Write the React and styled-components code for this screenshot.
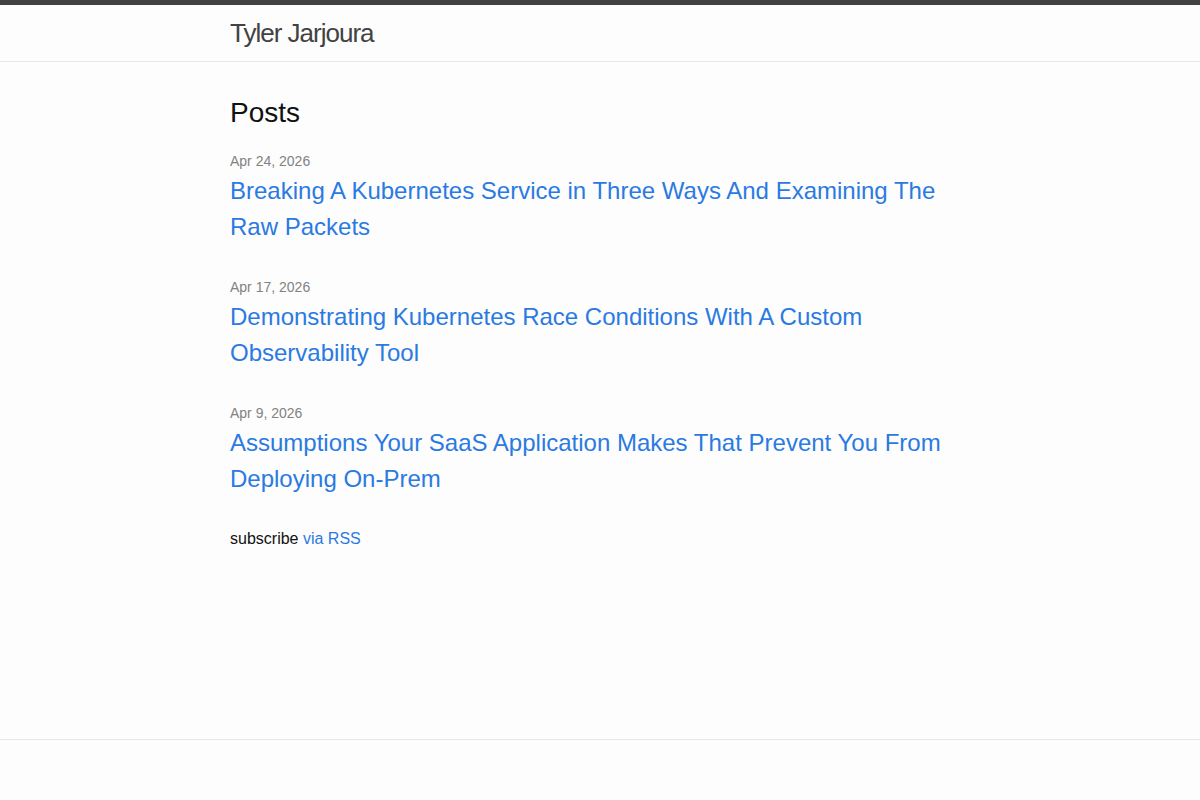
import React from "react";
import styled, { createGlobalStyle } from "styled-components";

const GlobalStyle = createGlobalStyle`
  * { box-sizing: border-box; }
  html, body { margin: 0; padding: 0; }
  body {
    font: 400 16px/1.5 "Liberation Sans", Helvetica, Arial, sans-serif;
    color: #111111;
    background-color: #fdfdfd;
    -webkit-font-smoothing: antialiased;
  }
`;

const Page = styled.div`
  display: flex;
  flex-direction: column;
  min-height: 100vh;
`;

const Wrapper = styled.div`
  max-width: 740px;
  margin: 0 auto;
  padding: 0 30px;
  box-sizing: content-box;
`;

const Header = styled.header`
  border-top: 5px solid #424242;
  border-bottom: 1px solid #e8e8e8;
  min-height: 56px;
`;

const SiteTitle = styled.a`
  display: inline-block;
  font-size: 26px;
  font-weight: 300;
  line-height: 56px;
  letter-spacing: -1px;
  color: #424242;
  text-decoration: none;
`;

const Main = styled.main`
  flex: 1;
  padding: 30px 0;
`;

const ListHeading = styled.h2`
  font-size: 28px;
  font-weight: 400;
  line-height: 1.5;
  margin: 0 0 15px;
`;

const PostList = styled.ul`
  list-style: none;
  margin: 0 0 15px;
  padding: 0;
`;

const PostItem = styled.li`
  margin-bottom: 30px;
`;

const PostMeta = styled.span`
  font-size: 14px;
  color: #828282;
`;

const PostTitle = styled.h3`
  margin: 0 0 15px;
  font-weight: 400;
  font-size: 24px;
  line-height: 1.5;
`;

const PostLink = styled.a`
  display: block;
  color: #2a7ae2;
  text-decoration: none;
`;

const Subscribe = styled.p`
  margin: 0 0 15px;
`;

const TextLink = styled.a`
  color: #2a7ae2;
  text-decoration: none;
`;

const Footer = styled.footer`
  border-top: 1px solid #e8e8e8;
  padding: 30px 0;
`;

const posts = [
  {
    date: "Apr 24, 2026",
    title: "Breaking A Kubernetes Service in Three Ways And Examining The Raw Packets",
  },
  {
    date: "Apr 17, 2026",
    title: "Demonstrating Kubernetes Race Conditions With A Custom Observability Tool",
  },
  {
    date: "Apr 9, 2026",
    title: "Assumptions Your SaaS Application Makes That Prevent You From Deploying On-Prem",
  },
];

export default function App() {
  return (
    <Page>
      <GlobalStyle />
      <Header>
        <Wrapper>
          <SiteTitle href="#">Tyler Jarjoura</SiteTitle>
        </Wrapper>
      </Header>
      <Main>
        <Wrapper>
          <ListHeading>Posts</ListHeading>
          <PostList>
            {posts.map((p) => (
              <PostItem key={p.title}>
                <PostMeta>{p.date}</PostMeta>
                <PostTitle>
                  <PostLink href="#">{p.title}</PostLink>
                </PostTitle>
              </PostItem>
            ))}
          </PostList>
          <Subscribe>
            subscribe <TextLink href="#">via RSS</TextLink>
          </Subscribe>
        </Wrapper>
      </Main>
      <Footer>
        <Wrapper />
      </Footer>
    </Page>
  );
}
